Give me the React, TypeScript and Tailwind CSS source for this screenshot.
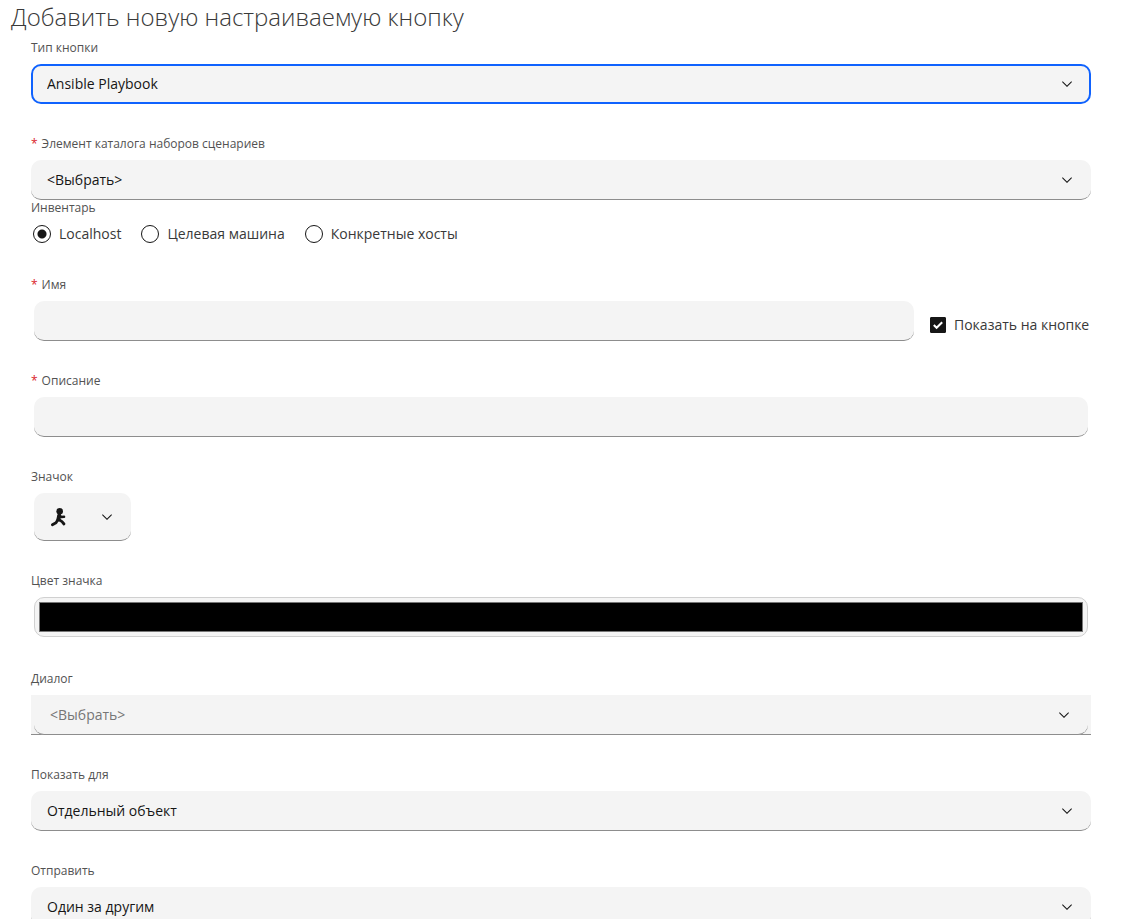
import { useState, type ReactNode } from "react";
import clsx from "clsx";

const fieldClass = "block h-10 w-full rounded-[10px] bg-[#f4f4f4] text-sm outline-none";
const underlineClass = "border-b border-[#8d8d8d] px-4";

const inventoryOptions = [
    { value: "localhost", label: "Localhost" },
    { value: "vmdb_object", label: "Целевая машина" },
    { value: "manual", label: "Конкретные хосты" },
];

const Chevron = ({ className }: { className?: string }) => (
    <svg viewBox="0 0 16 16" className={clsx("size-4 fill-[#161616]", className)} aria-hidden="true">
        <path d="M8 11L3 6 3.7 5.3 8 9.6 12.3 5.3 13 6z" />
    </svg>
);

const RunnerIcon = () => (
    <svg viewBox="0 0 16 20" className="h-5 w-4" fill="none" stroke="#161616" aria-hidden="true">
        <circle cx="9.7" cy="4.2" r="3.3" fill="#161616" stroke="none" />
        <path d="M9.2 8.4 L8.4 12.6" strokeWidth="4" strokeLinecap="round" />
        <path d="M9.4 8.6 L11.4 10 L14 9.8" strokeWidth="2.6" strokeLinecap="round" strokeLinejoin="round" />
        <path d="M8 12.6 L6 15.8 L2.4 17.8" strokeWidth="2.8" strokeLinecap="round" strokeLinejoin="round" />
        <path d="M9 12.6 L12 14.6 L14 17" strokeWidth="2.8" strokeLinecap="round" strokeLinejoin="round" />
    </svg>
);

type FieldProps = {
    id: string;
    label: string;
    required?: boolean;
    children: ReactNode;
};

const Field = ({ id, label, required, children }: FieldProps) => (
    <div className="flex flex-col gap-2">
        <label htmlFor={id} className="text-xs text-[#525252]">
            {required && <span className="mr-1 text-[#da1e28]">*</span>}
            {label}
        </label>
        {children}
    </div>
);

type SelectProps = {
    id: string;
    options: string[];
    active?: boolean;
    muted?: boolean;
};

const Select = ({ id, options, active, muted }: SelectProps) => (
    <div className="relative">
        <select
            id={id}
            className={clsx(
                fieldClass,
                "appearance-none",
                active ? "border-2 border-[#0f62fe] px-[14px] pb-px" : underlineClass,
                muted ? "text-[#767676]" : "text-[#161616]"
            )}
        >
            {options.map(option => (
                <option key={option}>{option}</option>
            ))}
        </select>
        <Chevron className="pointer-events-none absolute top-3 right-4" />
    </div>
);

export default function App() {
    const [inventory, setInventory] = useState("localhost");
    const [display, setDisplay] = useState(true);
    const [color, setColor] = useState("#000000");

    return (
        <main className="bg-white pr-[35px] pl-[11px] font-['Open_Sans',sans-serif] text-[#393939]">
            <h1 className="h-10 text-2xl leading-[34px] font-light">
                Добавить новую настраиваемую кнопку
            </h1>

            <form className="flex flex-col gap-8 pl-5">
                <Field id="button_type" label="Тип кнопки">
                    <Select id="button_type" options={["Ansible Playbook", "По умолчанию"]} active />
                </Field>

                <div>
                    <Field id="service_template" label="Элемент каталога наборов сценариев" required>
                        <Select id="service_template" options={["<Выбрать>"]} />
                    </Field>

                    <fieldset className="pb-px">
                        <legend className="mb-2 text-xs text-[#525252]">Инвентарь</legend>
                        <div className="flex h-5 items-center gap-5 pl-[2px]">
                            {inventoryOptions.map(({ value, label }) => (
                                <label key={value} className="flex items-center gap-2 text-sm">
                                    <input
                                        type="radio"
                                        name="inventory"
                                        value={value}
                                        checked={inventory === value}
                                        onChange={() => setInventory(value)}
                                        className="size-[18px] appearance-none rounded-full border border-[#161616] bg-white checked:bg-[radial-gradient(circle,#161616_4px,#ffffff_5px)]"
                                    />
                                    {label}
                                </label>
                            ))}
                        </div>
                    </fieldset>
                </div>

                <Field id="name" label="Имя" required>
                    <div className="flex items-center gap-4 pl-[3px]">
                        <input id="name" type="text" className={clsx(fieldClass, underlineClass, "min-w-0 flex-1")} />
                        <label className="mt-2 flex w-[161px] items-center gap-2 text-sm whitespace-nowrap">
                            <span className="relative size-4">
                                <input
                                    type="checkbox"
                                    checked={display}
                                    onChange={e => setDisplay(e.target.checked)}
                                    className="peer block size-4 appearance-none rounded-[1px] border border-[#161616] bg-white checked:bg-[#161616]"
                                />
                                <svg
                                    viewBox="0 0 16 16"
                                    className="pointer-events-none absolute inset-0 hidden size-4 peer-checked:block"
                                    fill="none"
                                    stroke="#fff"
                                    strokeWidth="2"
                                    aria-hidden="true"
                                >
                                    <path d="M3.8 8 L6.6 10.8 L12.2 5.2" />
                                </svg>
                            </span>
                            Показать на кнопке
                        </label>
                    </div>
                </Field>

                <Field id="description" label="Описание" required>
                    <div className="px-[3px]">
                        <input id="description" type="text" className={clsx(fieldClass, underlineClass)} />
                    </div>
                </Field>

                <Field id="button_icon" label="Значок">
                    <button
                        id="button_icon"
                        type="button"
                        className="ml-[3px] flex h-12 w-[97px] items-center justify-between rounded-[10px] border-b border-[#8d8d8d] bg-[#f4f4f4] px-4"
                    >
                        <RunnerIcon />
                        <Chevron />
                    </button>
                </Field>

                <Field id="button_color" label="Цвет значка">
                    <div className="px-[3px] pb-[2px]">
                        <input
                            id="button_color"
                            type="color"
                            value={color}
                            onChange={e => setColor(e.target.value)}
                            className="block h-10 w-full rounded-[10px] border border-[#d0d0d0] bg-[#f4f4f4] p-1 [&::-webkit-color-swatch]:rounded-none [&::-webkit-color-swatch]:border [&::-webkit-color-swatch]:border-[#777777] [&::-webkit-color-swatch-wrapper]:p-0"
                        />
                    </div>
                </Field>

                <Field id="dialog" label="Диалог">
                    <div className="border-b border-[#8d8d8d] bg-[#f4f4f4] px-[3px]">
                        <div className="-mb-px">
                            <Select id="dialog" options={["<Выбрать>"]} muted />
                        </div>
                    </div>
                </Field>

                <Field id="display_for" label="Показать для">
                    <Select id="display_for" options={["Отдельный объект", "Список", "Отдельный объект и список"]} />
                </Field>

                <Field id="submit_how" label="Отправить">
                    <Select id="submit_how" options={["Один за другим", "Отправить все"]} />
                </Field>
            </form>
        </main>
    );
}
